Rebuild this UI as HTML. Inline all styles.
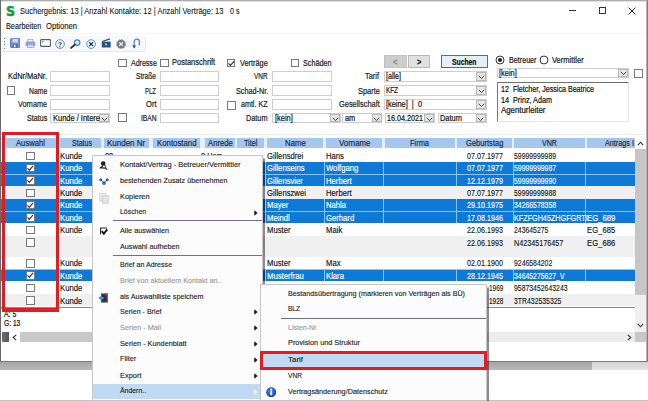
<!DOCTYPE html>
<html lang="de"><head><meta charset="utf-8"><title>Suchergebnis</title>
<style>
html,body{margin:0;padding:0;background:#fff;}
body{width:648px;height:401px;position:relative;overflow:hidden;font-family:"Liberation Sans", sans-serif;}
body>div,body>span,body>svg{position:absolute;box-sizing:border-box;}
body>span{white-space:pre;line-height:12px;height:12px;-webkit-text-stroke:0.2px currentColor;transform-origin:0 0;}
</style></head><body>
<div style="left:0px;top:0px;width:648px;height:1px;background:#adadb0;"></div>
<div style="left:0px;top:1px;width:648px;height:1px;background:#e2e2e4;"></div>
<div style="left:0px;top:0px;width:1px;height:362px;background:#686868;"></div>
<div style="left:646px;top:0px;width:1px;height:362px;background:#b4b4b4;"></div>
<div style="left:647px;top:0px;width:1px;height:362px;background:#808080;"></div>
<span style="left:6.2px;top:2.7px;font-family:DejaVu Sans,Liberation Sans,sans-serif;font-size:14px;line-height:16px;height:16px;font-weight:700;color:#109b46;-webkit-text-stroke:0.5px #109b46;transform:scaleX(0.9);">S</span>
<span style="left:20.00px;top:5.30px;font-size:9.4px;color:#111;transform:scaleX(0.8028);-webkit-text-stroke-width:0.08px;">Suchergebnis: 13 | Anzahl Kontakte: 12 | Anzahl Verträge: 13</span>
<span style="left:229.50px;top:5.30px;font-size:9.4px;color:#111;transform:scaleX(0.7591);-webkit-text-stroke-width:0.08px;">0 s</span>
<div style="left:569px;top:10px;width:7px;height:1px;background:#333;"></div>
<div style="left:598.5px;top:7px;width:7.0px;height:6.5px;border:1px solid #333;"></div>
<svg style="left:628px;top:6.5px" width="8" height="8" viewBox="0 0 8 8"><path d="M0.6 0.6L7.4 7.4M7.4 0.6L0.6 7.4" stroke="#222" stroke-width="1" fill="none"/></svg>
<span style="left:5.50px;top:20.20px;font-size:8.9px;color:#111;transform:scaleX(0.8221);-webkit-text-stroke-width:0.12px;">Bearbeiten</span>
<span style="left:46.00px;top:20.20px;font-size:8.9px;color:#111;transform:scaleX(0.8604);-webkit-text-stroke-width:0.12px;">Optionen</span>
<div style="left:1px;top:33px;width:645px;height:1px;background:#f7f7f7;"></div>
<div style="left:2px;top:35.5px;width:144px;height:16.5px;background:#f6f8fc;border-radius:2px;border-bottom:1px solid #e3e8f0;border-right:1px solid #e8ebf1;"></div>
<div style="left:4px;top:37.6px;width:1px;height:1.0px;background:#5c6b80;"></div>
<div style="left:4px;top:40.95px;width:1px;height:1.0px;background:#5c6b80;"></div>
<div style="left:4px;top:44.300000000000004px;width:1px;height:1.0px;background:#5c6b80;"></div>
<div style="left:4px;top:47.650000000000006px;width:1px;height:1.0px;background:#5c6b80;"></div>
<svg style="left:10px;top:38.2px" width="10.4" height="10.2" viewBox="0 0 11 11"><rect x="0.5" y="0.5" width="10" height="10" rx="1" fill="#7590cb" stroke="#5a76b6"/><rect x="2.5" y="0.8" width="6" height="4" fill="#cfdaf0"/><rect x="3" y="6.5" width="5" height="4" fill="#5069a8"/><rect x="4.2" y="7.2" width="1.6" height="2.8" fill="#f0f4fb"/></svg>
<svg style="left:25.2px;top:39.2px" width="10.8" height="9" viewBox="0 0 12 11"><rect x="3" y="0.5" width="6" height="3.5" fill="#f4f7fc" stroke="#8aa0cc" stroke-width=".8"/><rect x="0.6" y="3.6" width="10.8" height="5" rx="1" fill="#93abd9" stroke="#6c87c0" stroke-width=".8"/><rect x="2.4" y="6.6" width="7.2" height="3.6" fill="#f2f5fb" stroke="#7c93c4" stroke-width=".8"/><rect x="3.6" y="8" width="4.6" height=".8" fill="#7c93c4"/></svg>
<svg style="left:40px;top:39.2px" width="11" height="8" viewBox="0 0 11 8"><rect x="0.6" y="0.6" width="9.8" height="6.8" rx=".6" fill="#fff" stroke="#555c68" stroke-width="1.1"/><rect x="2" y="2.2" width="1.6" height="1.3" fill="#5577bb"/></svg>
<svg style="left:55.4px;top:38.6px" width="10" height="10" viewBox="0 0 11 11"><circle cx="5.5" cy="5.5" r="4.7" fill="#fff" stroke="#3f77b7" stroke-width="1"/><text x="5.5" y="8.3" font-size="7.8" font-weight="700" text-anchor="middle" fill="#1c2d44" font-family="Liberation Sans, sans-serif">?</text></svg>
<svg style="left:70px;top:38.6px" width="11" height="10" viewBox="0 0 12 11"><circle cx="7.8" cy="3.9" r="3" fill="#d8e9fa" stroke="#3f86cf" stroke-width="1.4"/><path d="M5.3 6.2L1.2 9.8" stroke="#23282e" stroke-width="2" stroke-linecap="round"/></svg>
<svg style="left:85.8px;top:38.6px" width="10.2" height="10.2" viewBox="0 0 11 11"><circle cx="5.5" cy="5.5" r="4.7" fill="#f4f9ff" stroke="#4a8ccb" stroke-width="1"/><path d="M3.3 3.3L7.7 7.7M7.7 3.3L3.3 7.7" stroke="#1f2a38" stroke-width="1.3"/></svg>
<svg style="left:100.6px;top:38.3px" width="10.4" height="10" viewBox="0 0 11 11"><path d="M1 3.8L9.6 0.9" stroke="#2a4d75" stroke-width="1.3"/><rect x="0.6" y="4" width="9.8" height="6.4" fill="#27527f"/><rect x="4.2" y="6" width="2.2" height="2" fill="#9fd0f5"/></svg>
<svg style="left:115.7px;top:38.6px" width="10.2" height="10.2" viewBox="0 0 11 11"><circle cx="5.5" cy="5.5" r="4.7" fill="#77797d"/><path d="M3.6 3.6L7.4 7.4M7.4 3.6L3.6 7.4" stroke="#e9e9e9" stroke-width="1.5"/><circle cx="5.5" cy="5.5" r="4.9" fill="none" stroke="#8d8f94" stroke-width=".9" stroke-dasharray="2 1.2"/></svg>
<svg style="left:132.2px;top:37.8px" width="9" height="11" viewBox="0 0 9 11"><path d="M2.2 8V4Q2.2 1.2 4.8 1.2Q7.4 1.2 7.4 4V7.6" fill="none" stroke="#5288cc" stroke-width="1.3"/><path d="M0.4 7.4L2.2 10.4L4 7.4Z" fill="#1f3f70"/></svg>
<span style="left:8.00px;top:69.90px;font-size:8.4px;color:#1a1a1a;transform:scaleX(0.8914);">KdNr/MaNr.</span>
<span style="left:28.80px;top:84.80px;font-size:8.4px;color:#1a1a1a;transform:scaleX(0.8145);">Name</span>
<span style="left:18.00px;top:98.40px;font-size:8.4px;color:#1a1a1a;transform:scaleX(0.8649);">Vorname</span>
<span style="left:26.80px;top:111.80px;font-size:8.4px;color:#1a1a1a;transform:scaleX(0.8505);">Status</span>
<div style="left:50px;top:70.7px;width:60px;height:10.899999999999991px;background:#fff;border:1px solid #cdcdcd;"></div>
<div style="left:50px;top:84.8px;width:60px;height:10.900000000000006px;background:#fff;border:1px solid #cdcdcd;"></div>
<div style="left:50px;top:98.7px;width:60px;height:10.899999999999991px;background:#fff;border:1px solid #cdcdcd;"></div>
<div style="left:50px;top:112.7px;width:60px;height:10.700000000000003px;background:#fff;border:1px solid #cdcdcd;"></div>
<div style="left:99px;top:113.7px;width:10px;height:8.700000000000003px;background:#e6e6e6;border:1px solid #b9b9b9;"></div>
<svg style="left:100.5px;top:116.55000000000001px" width="7" height="5" viewBox="0 0 7 5"><path d="M0.8 0.8L3.5 3.6L6.2 0.8" stroke="#444" stroke-width="1" fill="none"/></svg>
<span style="left:52.50px;top:112.05px;font-size:8.4px;color:#111;transform:scaleX(0.8931);">Kunde / Intere</span>
<div style="left:6.5px;top:86.3px;width:8.6px;height:8.599999999999994px;background:#fff;border:1px solid #787878;"></div>
<div style="left:118.3px;top:58.8px;width:8.599999999999994px;height:8.599999999999994px;background:#fff;border:1px solid #787878;"></div>
<span style="left:130.50px;top:56.70px;font-size:8.4px;color:#1a1a1a;transform:scaleX(0.8395);">Adresse</span>
<div style="left:160px;top:58.8px;width:8.599999999999994px;height:8.599999999999994px;background:#fff;border:1px solid #787878;"></div>
<span style="left:171.80px;top:55.60px;font-size:8.4px;color:#1a1a1a;transform:scaleX(0.8922);">Postanschrift</span>
<span style="left:136.30px;top:69.90px;font-size:8.4px;color:#1a1a1a;transform:scaleX(0.7955);">Straße</span>
<div style="left:160px;top:70.7px;width:59.30000000000001px;height:10.899999999999991px;background:#fff;border:1px solid #cdcdcd;"></div>
<span style="left:145.40px;top:84.80px;font-size:8.4px;color:#1a1a1a;transform:scaleX(0.7089);">PLZ</span>
<div style="left:160px;top:84.8px;width:59.30000000000001px;height:10.900000000000006px;background:#fff;border:1px solid #cdcdcd;"></div>
<span style="left:145.80px;top:98.40px;font-size:8.4px;color:#1a1a1a;transform:scaleX(0.9020);">Ort</span>
<div style="left:160px;top:98.7px;width:59.30000000000001px;height:10.899999999999991px;background:#fff;border:1px solid #cdcdcd;"></div>
<span style="left:140.60px;top:111.80px;font-size:8.4px;color:#1a1a1a;transform:scaleX(0.8026);">IBAN</span>
<div style="left:160px;top:112.7px;width:59.30000000000001px;height:10.700000000000003px;background:#fff;border:1px solid #cdcdcd;"></div>
<div style="left:118.3px;top:113.2px;width:8.599999999999994px;height:8.599999999999994px;background:#fff;border:1px solid #787878;"></div>
<div style="left:226.8px;top:58.8px;width:8.599999999999994px;height:8.599999999999994px;background:#fff;border:1px solid #787878;"></div>
<svg style="left:226.8px;top:58.8px" width="8.6" height="8.6" viewBox="0 0 8 8"><path d="M1.4 4.1L3.2 6L6.7 1.9" stroke="#333" stroke-width="1.1" fill="none"/></svg>
<span style="left:239.50px;top:56.90px;font-size:8.4px;color:#1a1a1a;transform:scaleX(0.8778);">Verträge</span>
<div style="left:290.8px;top:58.8px;width:8.600000000000023px;height:8.599999999999994px;background:#fff;border:1px solid #787878;"></div>
<span style="left:303.20px;top:56.90px;font-size:8.4px;color:#1a1a1a;transform:scaleX(0.8650);">Schäden</span>
<span style="left:254.30px;top:69.90px;font-size:8.4px;color:#1a1a1a;transform:scaleX(0.7633);">VNR</span>
<span style="left:235.50px;top:84.80px;font-size:8.4px;color:#1a1a1a;transform:scaleX(0.8671);">Schad-Nr.</span>
<span style="left:241.30px;top:98.40px;font-size:8.4px;color:#1a1a1a;transform:scaleX(0.8497);">amtl. KZ</span>
<span style="left:246.30px;top:111.80px;font-size:8.4px;color:#1a1a1a;transform:scaleX(0.8714);">Datum</span>
<div style="left:272px;top:70.7px;width:59.5px;height:10.899999999999991px;background:#fff;border:1px solid #cdcdcd;"></div>
<div style="left:272px;top:84.8px;width:59.5px;height:10.900000000000006px;background:#fff;border:1px solid #cdcdcd;"></div>
<div style="left:272px;top:98.7px;width:59.5px;height:10.899999999999991px;background:#fff;border:1px solid #cdcdcd;"></div>
<div style="left:227.3px;top:101.2px;width:8.599999999999994px;height:8.599999999999994px;background:#fff;border:1px solid #787878;"></div>
<div style="left:272px;top:112.7px;width:69px;height:10.700000000000003px;background:#fff;border:1px solid #cdcdcd;"></div>
<div style="left:330px;top:113.7px;width:10px;height:8.700000000000003px;background:#e6e6e6;border:1px solid #b9b9b9;"></div>
<svg style="left:331.5px;top:116.55000000000001px" width="7" height="5" viewBox="0 0 7 5"><path d="M0.8 0.8L3.5 3.6L6.2 0.8" stroke="#444" stroke-width="1" fill="none"/></svg>
<span style="left:274.50px;top:112.05px;font-size:8.4px;color:#111;transform:scaleX(0.8850);">[kein]</span>
<div style="left:342.2px;top:112.7px;width:40.30000000000001px;height:10.700000000000003px;background:#fff;border:1px solid #cdcdcd;"></div>
<div style="left:371.5px;top:113.7px;width:10.0px;height:8.700000000000003px;background:#e6e6e6;border:1px solid #b9b9b9;"></div>
<svg style="left:373.0px;top:116.55000000000001px" width="7" height="5" viewBox="0 0 7 5"><path d="M0.8 0.8L3.5 3.6L6.2 0.8" stroke="#444" stroke-width="1" fill="none"/></svg>
<span style="left:344.70px;top:112.05px;font-size:8.4px;color:#111;transform:scaleX(0.8850);">am</span>
<div style="left:384.2px;top:55.3px;width:22.400000000000034px;height:12.299999999999997px;background:#cdcdcd;border:1px solid #c2c2c2;"></div>
<span style="left:393.23px;top:55.90px;font-size:8.4px;color:#8a8a8a;transform:scaleX(0.8850);font-weight:700;">&lt;</span>
<div style="left:408px;top:55.3px;width:22.399999999999977px;height:12.299999999999997px;background:#e1e1e1;border:1px solid #b8b8b8;"></div>
<span style="left:417.03px;top:55.90px;font-size:8.4px;color:#222;transform:scaleX(0.8850);font-weight:700;">&gt;</span>
<div style="left:440.8px;top:55.3px;width:46.80000000000001px;height:13.0px;background:#e5effa;border:1.5px solid #1f7bd4;"></div>
<span style="left:451.80px;top:56.00px;font-size:8.4px;color:#111;transform:scaleX(0.8099);font-weight:700;">Suchen</span>
<span style="left:365.49px;top:69.90px;font-size:8.4px;color:#1a1a1a;transform:scaleX(0.8850);">Tarif</span>
<div style="left:383.8px;top:70.7px;width:103.19999999999999px;height:10.899999999999991px;background:#fff;border:1px solid #cdcdcd;"></div>
<div style="left:476px;top:71.7px;width:10px;height:8.899999999999991px;background:#e6e6e6;border:1px solid #b9b9b9;"></div>
<svg style="left:477.5px;top:74.65px" width="7" height="5" viewBox="0 0 7 5"><path d="M0.8 0.8L3.5 3.6L6.2 0.8" stroke="#444" stroke-width="1" fill="none"/></svg>
<span style="left:386.00px;top:70.15px;font-size:8.4px;color:#111;transform:scaleX(0.8473);">[alle]</span>
<span style="left:357.65px;top:84.80px;font-size:8.4px;color:#1a1a1a;transform:scaleX(0.8850);">Sparte</span>
<div style="left:383.8px;top:84.8px;width:103.19999999999999px;height:10.900000000000006px;background:#fff;border:1px solid #cdcdcd;"></div>
<div style="left:476px;top:85.8px;width:10px;height:8.900000000000006px;background:#e6e6e6;border:1px solid #b9b9b9;"></div>
<svg style="left:477.5px;top:88.75px" width="7" height="5" viewBox="0 0 7 5"><path d="M0.8 0.8L3.5 3.6L6.2 0.8" stroke="#444" stroke-width="1" fill="none"/></svg>
<span style="left:386.00px;top:84.25px;font-size:8.4px;color:#111;transform:scaleX(0.7581);">KFZ</span>
<span style="left:338.71px;top:98.40px;font-size:8.4px;color:#1a1a1a;transform:scaleX(0.8850);">Gesellschaft</span>
<div style="left:383.8px;top:98.7px;width:103.19999999999999px;height:10.899999999999991px;background:#fff;border:1px solid #cdcdcd;"></div>
<div style="left:476px;top:99.7px;width:10px;height:8.899999999999991px;background:#e6e6e6;border:1px solid #b9b9b9;"></div>
<svg style="left:477.5px;top:102.65px" width="7" height="5" viewBox="0 0 7 5"><path d="M0.8 0.8L3.5 3.6L6.2 0.8" stroke="#444" stroke-width="1" fill="none"/></svg>
<span style="left:386.00px;top:98.15px;font-size:8.4px;color:#111;transform:scaleX(0.8817);">[keine]  |  0</span>
<div style="left:384.5px;top:112.7px;width:50.69999999999999px;height:10.700000000000003px;background:#fff;border:1px solid #cdcdcd;"></div>
<div style="left:424.2px;top:113.7px;width:10.0px;height:8.700000000000003px;background:#e6e6e6;border:1px solid #b9b9b9;"></div>
<svg style="left:425.7px;top:116.55000000000001px" width="7" height="5" viewBox="0 0 7 5"><path d="M0.8 0.8L3.5 3.6L6.2 0.8" stroke="#444" stroke-width="1" fill="none"/></svg>
<span style="left:387.00px;top:112.00px;font-size:8.4px;color:#111;transform:scaleX(0.8587);">16.04.2021</span>
<div style="left:437.5px;top:112.7px;width:49.30000000000001px;height:10.700000000000003px;background:#fff;border:1px solid #cdcdcd;"></div>
<div style="left:475.8px;top:113.7px;width:10.0px;height:8.700000000000003px;background:#e6e6e6;border:1px solid #b9b9b9;"></div>
<svg style="left:477.3px;top:116.55000000000001px" width="7" height="5" viewBox="0 0 7 5"><path d="M0.8 0.8L3.5 3.6L6.2 0.8" stroke="#444" stroke-width="1" fill="none"/></svg>
<span style="left:440.00px;top:112.05px;font-size:8.4px;color:#111;transform:scaleX(0.8850);">Datum</span>
<svg style="left:495px;top:55px" width="10" height="10" viewBox="0 0 10 10"><circle cx="5" cy="5" r="4" fill="#fff" stroke="#333" stroke-width="1"/><circle cx="5" cy="5" r="2.1" fill="#222"/></svg>
<span style="left:508.50px;top:53.80px;font-size:8.4px;color:#1a1a1a;transform:scaleX(0.8560);">Betreuer</span>
<svg style="left:539px;top:55px" width="10" height="10" viewBox="0 0 10 10"><circle cx="5" cy="5" r="4" fill="#fff" stroke="#333" stroke-width="1"/></svg>
<span style="left:552.30px;top:53.80px;font-size:8.4px;color:#1a1a1a;transform:scaleX(0.8961);">Vermittler</span>
<div style="left:496.5px;top:67.5px;width:132.79999999999995px;height:10.5px;background:#fff;border:1px solid #cdcdcd;"></div>
<div style="left:618.3px;top:68.5px;width:10.0px;height:8.5px;background:#e6e6e6;border:1px solid #b9b9b9;"></div>
<svg style="left:619.8px;top:71.25px" width="7" height="5" viewBox="0 0 7 5"><path d="M0.8 0.8L3.5 3.6L6.2 0.8" stroke="#444" stroke-width="1" fill="none"/></svg>
<span style="left:499.00px;top:66.75px;font-size:8.4px;color:#111;transform:scaleX(0.8850);">[kein]</span>
<div style="left:634px;top:69px;width:9px;height:9px;background:#fff;border:1px solid #787878;"></div>
<div style="left:496.5px;top:82px;width:132.79999999999995px;height:40px;background:#fff;border-top:1.5px solid #6f6f6f;border-left:1.5px solid #7a7a7a;border-right:1px solid #e6e6e6;border-bottom:1px solid #e6e6e6;"></div>
<span style="left:501.00px;top:83.00px;font-size:8.4px;color:#111;transform:scaleX(0.8502);">12  Fletcher, Jessica Beatrice</span>
<span style="left:501.00px;top:93.50px;font-size:8.4px;color:#111;transform:scaleX(0.8626);">14  Prinz, Adam</span>
<span style="left:501.00px;top:104.00px;font-size:8.4px;color:#111;transform:scaleX(0.9368);">Agenturleiter</span>
<div style="left:1px;top:134px;width:645px;height:1px;background:#ececec;"></div>
<div style="left:1px;top:138px;width:634px;height:10px;background:#e4f0fc;"></div>
<div style="left:4.4px;top:138px;width:51.6px;height:10px;background:#a5c6ed;"></div>
<span style="left:16.00px;top:137.00px;font-size:9.1px;color:#14233a;transform:scaleX(0.8436);-webkit-text-stroke-width:0.15px;">Auswahl</span>
<div style="left:60px;top:138px;width:41.3px;height:10px;background:#a5c6ed;"></div>
<span style="left:71.70px;top:137.00px;font-size:9.1px;color:#14233a;transform:scaleX(0.7758);-webkit-text-stroke-width:0.15px;">Status</span>
<div style="left:104.3px;top:138px;width:44.7px;height:10px;background:#a5c6ed;"></div>
<span style="left:107.30px;top:137.00px;font-size:9.1px;color:#14233a;transform:scaleX(0.8785);-webkit-text-stroke-width:0.15px;">Kunden Nr</span>
<div style="left:152.5px;top:138px;width:47.5px;height:10px;background:#a5c6ed;"></div>
<span style="left:156.90px;top:137.00px;font-size:9.1px;color:#14233a;transform:scaleX(0.8584);-webkit-text-stroke-width:0.15px;">Kontostand</span>
<div style="left:204.5px;top:138px;width:30.5px;height:10px;background:#a5c6ed;"></div>
<span style="left:208.00px;top:137.00px;font-size:9.1px;color:#14233a;transform:scaleX(0.8456);-webkit-text-stroke-width:0.15px;">Anrede</span>
<div style="left:236.8px;top:138px;width:27.399999999999977px;height:10px;background:#a5c6ed;"></div>
<span style="left:244.10px;top:137.00px;font-size:9.1px;color:#14233a;transform:scaleX(0.7896);-webkit-text-stroke-width:0.15px;">Titel</span>
<div style="left:266.7px;top:138px;width:56.80000000000001px;height:10px;background:#a5c6ed;"></div>
<span style="left:284.50px;top:137.00px;font-size:9.1px;color:#14233a;transform:scaleX(0.8613);-webkit-text-stroke-width:0.15px;">Name</span>
<div style="left:326px;top:138px;width:56px;height:10px;background:#a5c6ed;"></div>
<span style="left:338.50px;top:137.00px;font-size:9.1px;color:#14233a;transform:scaleX(0.8625);-webkit-text-stroke-width:0.15px;">Vorname</span>
<div style="left:384.6px;top:138px;width:70.19999999999999px;height:10px;background:#a5c6ed;"></div>
<span style="left:410.30px;top:137.00px;font-size:9.1px;color:#14233a;transform:scaleX(0.8172);-webkit-text-stroke-width:0.15px;">Firma</span>
<div style="left:457.3px;top:138px;width:54.900000000000034px;height:10px;background:#a5c6ed;"></div>
<span style="left:466.30px;top:137.00px;font-size:9.1px;color:#14233a;transform:scaleX(0.8311);-webkit-text-stroke-width:0.15px;">Geburtstag</span>
<div style="left:514.4px;top:138px;width:70.30000000000007px;height:10px;background:#a5c6ed;"></div>
<span style="left:542.40px;top:137.00px;font-size:9.1px;color:#14233a;transform:scaleX(0.7759);-webkit-text-stroke-width:0.15px;">VNR</span>
<div style="left:586.9px;top:138px;width:48.10000000000002px;height:10px;background:#a5c6ed;"></div>
<span style="left:604.70px;top:137.00px;font-size:9.1px;color:#14233a;transform:scaleX(0.7966);-webkit-text-stroke-width:0.15px;">Antrags I</span>
<div style="left:26.3px;top:151.70000000000002px;width:8.400000000000002px;height:8.400000000000006px;background:#fff;border:1px solid #787878;"></div>
<span style="left:60.00px;top:150.00px;font-size:8.7px;color:#111;transform:scaleX(0.8876);-webkit-text-stroke-width:0.15px;">Kunde</span>
<span style="left:266.80px;top:150.00px;font-size:8.7px;color:#111;transform:scaleX(0.8850);-webkit-text-stroke-width:0.15px;">Gillensdrei</span>
<span style="left:326.20px;top:150.00px;font-size:8.7px;color:#111;transform:scaleX(0.8850);-webkit-text-stroke-width:0.15px;">Hans</span>
<span style="left:467.10px;top:150.00px;font-size:8.6px;color:#111;transform:scaleX(0.8346);-webkit-text-stroke-width:0.12px;">07.07.1977</span>
<span style="left:514.40px;top:150.00px;font-size:8.6px;color:#111;transform:scaleX(0.8000);-webkit-text-stroke-width:0.12px;">59999999989</span>
<div style="left:1px;top:161.65px;width:634px;height:12.349999999999994px;background:#8ec2f0;"></div>
<div style="left:1px;top:162.15px;width:634px;height:11.449999999999989px;background:#0f79d8;"></div>
<div style="left:59.3px;top:161.95000000000002px;width:0.7999999999999972px;height:11.749999999999972px;background:#86c4f4;"></div>
<div style="left:102.5px;top:161.95000000000002px;width:0.7999999999999972px;height:11.749999999999972px;background:#86c4f4;"></div>
<div style="left:150.5px;top:161.95000000000002px;width:0.8000000000000114px;height:11.749999999999972px;background:#86c4f4;"></div>
<div style="left:202px;top:161.95000000000002px;width:0.8000000000000114px;height:11.749999999999972px;background:#86c4f4;"></div>
<div style="left:236.5px;top:161.95000000000002px;width:0.8000000000000114px;height:11.749999999999972px;background:#86c4f4;"></div>
<div style="left:264.5px;top:161.95000000000002px;width:0.8000000000000114px;height:11.749999999999972px;background:#86c4f4;"></div>
<div style="left:324.2px;top:161.95000000000002px;width:0.8000000000000114px;height:11.749999999999972px;background:#86c4f4;"></div>
<div style="left:382.8px;top:161.95000000000002px;width:0.8000000000000114px;height:11.749999999999972px;background:#86c4f4;"></div>
<div style="left:455.6px;top:161.95000000000002px;width:0.8000000000000114px;height:11.749999999999972px;background:#86c4f4;"></div>
<div style="left:512.9px;top:161.95000000000002px;width:0.7999999999999545px;height:11.749999999999972px;background:#86c4f4;"></div>
<div style="left:585.4px;top:161.95000000000002px;width:0.7999999999999545px;height:11.749999999999972px;background:#86c4f4;"></div>
<div style="left:26.3px;top:164.05px;width:8.400000000000002px;height:8.400000000000006px;background:#fff;border:1px solid #787878;"></div>
<svg style="left:26.3px;top:164.05px" width="8.4" height="8.4" viewBox="0 0 8 8"><path d="M1.4 4.1L3.2 6L6.7 1.9" stroke="#333" stroke-width="1.1" fill="none"/></svg>
<span style="left:60.00px;top:162.35px;font-size:8.7px;color:#fff;transform:scaleX(0.8876);-webkit-text-stroke-width:0.15px;">Kunde</span>
<span style="left:266.80px;top:162.35px;font-size:8.7px;color:#fff;transform:scaleX(0.8850);-webkit-text-stroke-width:0.15px;">Gillenseins</span>
<span style="left:326.20px;top:162.35px;font-size:8.7px;color:#fff;transform:scaleX(0.8850);-webkit-text-stroke-width:0.15px;">Wolfgang</span>
<span style="left:467.10px;top:162.35px;font-size:8.6px;color:#fff;transform:scaleX(0.8346);-webkit-text-stroke-width:0.12px;">07.07.1977</span>
<span style="left:514.40px;top:162.35px;font-size:8.6px;color:#fff;transform:scaleX(0.8000);-webkit-text-stroke-width:0.12px;">59999999987</span>
<div style="left:1px;top:174.0px;width:634px;height:12.349999999999994px;background:#8ec2f0;"></div>
<div style="left:1px;top:174.5px;width:634px;height:11.449999999999989px;background:#0f79d8;"></div>
<div style="left:59.3px;top:174.3px;width:0.7999999999999972px;height:11.749999999999972px;background:#86c4f4;"></div>
<div style="left:102.5px;top:174.3px;width:0.7999999999999972px;height:11.749999999999972px;background:#86c4f4;"></div>
<div style="left:150.5px;top:174.3px;width:0.8000000000000114px;height:11.749999999999972px;background:#86c4f4;"></div>
<div style="left:202px;top:174.3px;width:0.8000000000000114px;height:11.749999999999972px;background:#86c4f4;"></div>
<div style="left:236.5px;top:174.3px;width:0.8000000000000114px;height:11.749999999999972px;background:#86c4f4;"></div>
<div style="left:264.5px;top:174.3px;width:0.8000000000000114px;height:11.749999999999972px;background:#86c4f4;"></div>
<div style="left:324.2px;top:174.3px;width:0.8000000000000114px;height:11.749999999999972px;background:#86c4f4;"></div>
<div style="left:382.8px;top:174.3px;width:0.8000000000000114px;height:11.749999999999972px;background:#86c4f4;"></div>
<div style="left:455.6px;top:174.3px;width:0.8000000000000114px;height:11.749999999999972px;background:#86c4f4;"></div>
<div style="left:512.9px;top:174.3px;width:0.7999999999999545px;height:11.749999999999972px;background:#86c4f4;"></div>
<div style="left:585.4px;top:174.3px;width:0.7999999999999545px;height:11.749999999999972px;background:#86c4f4;"></div>
<div style="left:26.3px;top:176.4px;width:8.400000000000002px;height:8.400000000000006px;background:#fff;border:1px solid #787878;"></div>
<svg style="left:26.3px;top:176.4px" width="8.4" height="8.4" viewBox="0 0 8 8"><path d="M1.4 4.1L3.2 6L6.7 1.9" stroke="#333" stroke-width="1.1" fill="none"/></svg>
<span style="left:60.00px;top:174.70px;font-size:8.7px;color:#fff;transform:scaleX(0.8876);-webkit-text-stroke-width:0.15px;">Kunde</span>
<span style="left:266.80px;top:174.70px;font-size:8.7px;color:#fff;transform:scaleX(0.8850);-webkit-text-stroke-width:0.15px;">Gillensvier</span>
<span style="left:326.20px;top:174.70px;font-size:8.7px;color:#fff;transform:scaleX(0.8850);-webkit-text-stroke-width:0.15px;">Herbert</span>
<span style="left:467.10px;top:174.70px;font-size:8.6px;color:#fff;transform:scaleX(0.8346);-webkit-text-stroke-width:0.12px;">12.12.1979</span>
<span style="left:514.40px;top:174.70px;font-size:8.6px;color:#fff;transform:scaleX(0.8000);-webkit-text-stroke-width:0.12px;">59999999990</span>
<div style="left:1px;top:186.35px;width:634px;height:12.349999999999994px;background:#f0f0f0;"></div>
<div style="left:26.3px;top:188.75px;width:8.400000000000002px;height:8.400000000000006px;background:#fff;border:1px solid #787878;"></div>
<span style="left:60.00px;top:187.05px;font-size:8.7px;color:#111;transform:scaleX(0.8876);-webkit-text-stroke-width:0.15px;">Kunde</span>
<span style="left:266.80px;top:187.05px;font-size:8.7px;color:#111;transform:scaleX(0.8850);-webkit-text-stroke-width:0.15px;">Gillenszwei</span>
<span style="left:326.20px;top:187.05px;font-size:8.7px;color:#111;transform:scaleX(0.8850);-webkit-text-stroke-width:0.15px;">Herbert</span>
<span style="left:467.10px;top:187.05px;font-size:8.6px;color:#111;transform:scaleX(0.8346);-webkit-text-stroke-width:0.12px;">07.07.1977</span>
<span style="left:514.40px;top:187.05px;font-size:8.6px;color:#111;transform:scaleX(0.8000);-webkit-text-stroke-width:0.12px;">59999999988</span>
<div style="left:1px;top:198.7px;width:634px;height:12.349999999999994px;background:#8ec2f0;"></div>
<div style="left:1px;top:199.2px;width:634px;height:11.449999999999989px;background:#0f79d8;"></div>
<div style="left:59.3px;top:199.0px;width:0.7999999999999972px;height:11.749999999999972px;background:#86c4f4;"></div>
<div style="left:102.5px;top:199.0px;width:0.7999999999999972px;height:11.749999999999972px;background:#86c4f4;"></div>
<div style="left:150.5px;top:199.0px;width:0.8000000000000114px;height:11.749999999999972px;background:#86c4f4;"></div>
<div style="left:202px;top:199.0px;width:0.8000000000000114px;height:11.749999999999972px;background:#86c4f4;"></div>
<div style="left:236.5px;top:199.0px;width:0.8000000000000114px;height:11.749999999999972px;background:#86c4f4;"></div>
<div style="left:264.5px;top:199.0px;width:0.8000000000000114px;height:11.749999999999972px;background:#86c4f4;"></div>
<div style="left:324.2px;top:199.0px;width:0.8000000000000114px;height:11.749999999999972px;background:#86c4f4;"></div>
<div style="left:382.8px;top:199.0px;width:0.8000000000000114px;height:11.749999999999972px;background:#86c4f4;"></div>
<div style="left:455.6px;top:199.0px;width:0.8000000000000114px;height:11.749999999999972px;background:#86c4f4;"></div>
<div style="left:512.9px;top:199.0px;width:0.7999999999999545px;height:11.749999999999972px;background:#86c4f4;"></div>
<div style="left:585.4px;top:199.0px;width:0.7999999999999545px;height:11.749999999999972px;background:#86c4f4;"></div>
<div style="left:26.3px;top:201.1px;width:8.400000000000002px;height:8.400000000000006px;background:#fff;border:1px solid #787878;"></div>
<svg style="left:26.3px;top:201.1px" width="8.4" height="8.4" viewBox="0 0 8 8"><path d="M1.4 4.1L3.2 6L6.7 1.9" stroke="#333" stroke-width="1.1" fill="none"/></svg>
<span style="left:60.00px;top:199.40px;font-size:8.7px;color:#fff;transform:scaleX(0.8876);-webkit-text-stroke-width:0.15px;">Kunde</span>
<span style="left:266.80px;top:199.40px;font-size:8.7px;color:#fff;transform:scaleX(0.8850);-webkit-text-stroke-width:0.15px;">Mayer</span>
<span style="left:326.20px;top:199.40px;font-size:8.7px;color:#fff;transform:scaleX(0.8850);-webkit-text-stroke-width:0.15px;">Nahla</span>
<span style="left:467.10px;top:199.40px;font-size:8.6px;color:#fff;transform:scaleX(0.8346);-webkit-text-stroke-width:0.12px;">29.10.1975</span>
<span style="left:514.40px;top:199.40px;font-size:8.6px;color:#fff;transform:scaleX(0.8000);-webkit-text-stroke-width:0.12px;">34266578358</span>
<div style="left:1px;top:211.04999999999998px;width:634px;height:12.349999999999994px;background:#8ec2f0;"></div>
<div style="left:1px;top:211.54999999999998px;width:634px;height:11.449999999999989px;background:#0f79d8;"></div>
<div style="left:59.3px;top:211.35px;width:0.7999999999999972px;height:11.749999999999972px;background:#86c4f4;"></div>
<div style="left:102.5px;top:211.35px;width:0.7999999999999972px;height:11.749999999999972px;background:#86c4f4;"></div>
<div style="left:150.5px;top:211.35px;width:0.8000000000000114px;height:11.749999999999972px;background:#86c4f4;"></div>
<div style="left:202px;top:211.35px;width:0.8000000000000114px;height:11.749999999999972px;background:#86c4f4;"></div>
<div style="left:236.5px;top:211.35px;width:0.8000000000000114px;height:11.749999999999972px;background:#86c4f4;"></div>
<div style="left:264.5px;top:211.35px;width:0.8000000000000114px;height:11.749999999999972px;background:#86c4f4;"></div>
<div style="left:324.2px;top:211.35px;width:0.8000000000000114px;height:11.749999999999972px;background:#86c4f4;"></div>
<div style="left:382.8px;top:211.35px;width:0.8000000000000114px;height:11.749999999999972px;background:#86c4f4;"></div>
<div style="left:455.6px;top:211.35px;width:0.8000000000000114px;height:11.749999999999972px;background:#86c4f4;"></div>
<div style="left:512.9px;top:211.35px;width:0.7999999999999545px;height:11.749999999999972px;background:#86c4f4;"></div>
<div style="left:585.4px;top:211.35px;width:0.7999999999999545px;height:11.749999999999972px;background:#86c4f4;"></div>
<div style="left:26.3px;top:213.45px;width:8.400000000000002px;height:8.400000000000006px;background:#fff;border:1px solid #787878;"></div>
<svg style="left:26.3px;top:213.45px" width="8.4" height="8.4" viewBox="0 0 8 8"><path d="M1.4 4.1L3.2 6L6.7 1.9" stroke="#333" stroke-width="1.1" fill="none"/></svg>
<span style="left:60.00px;top:211.75px;font-size:8.7px;color:#fff;transform:scaleX(0.8876);-webkit-text-stroke-width:0.15px;">Kunde</span>
<span style="left:266.80px;top:211.75px;font-size:8.7px;color:#fff;transform:scaleX(0.8850);-webkit-text-stroke-width:0.15px;">Meindl</span>
<span style="left:326.20px;top:211.75px;font-size:8.7px;color:#fff;transform:scaleX(0.8850);-webkit-text-stroke-width:0.15px;">Gerhard</span>
<span style="left:467.10px;top:211.75px;font-size:8.6px;color:#fff;transform:scaleX(0.8346);-webkit-text-stroke-width:0.12px;">17.08.1946</span>
<span style="left:514.40px;top:211.75px;font-size:8.6px;color:#fff;transform:scaleX(0.8400);-webkit-text-stroke-width:0.12px;">KFZFGH45ZHGFGRTI</span>
<span style="left:586.80px;top:211.75px;font-size:8.7px;color:#fff;transform:scaleX(0.8850);-webkit-text-stroke-width:0.15px;">EG_689</span>
<div style="left:26.3px;top:225.79999999999998px;width:8.400000000000002px;height:8.400000000000006px;background:#fff;border:1px solid #787878;"></div>
<span style="left:60.00px;top:224.10px;font-size:8.7px;color:#111;transform:scaleX(0.8876);-webkit-text-stroke-width:0.15px;">Kunde</span>
<span style="left:266.80px;top:224.10px;font-size:8.7px;color:#111;transform:scaleX(0.8850);-webkit-text-stroke-width:0.15px;">Muster</span>
<span style="left:326.20px;top:224.10px;font-size:8.7px;color:#111;transform:scaleX(0.8850);-webkit-text-stroke-width:0.15px;">Maik</span>
<span style="left:467.10px;top:224.10px;font-size:8.6px;color:#111;transform:scaleX(0.8346);-webkit-text-stroke-width:0.12px;">22.06.1993</span>
<span style="left:514.40px;top:224.10px;font-size:8.6px;color:#111;transform:scaleX(0.8000);-webkit-text-stroke-width:0.12px;">243645275</span>
<span style="left:586.80px;top:224.10px;font-size:8.7px;color:#111;transform:scaleX(0.8850);-webkit-text-stroke-width:0.15px;">EG_685</span>
<div style="left:1px;top:235.74999999999997px;width:634px;height:20.994999999999976px;background:#f0f0f0;"></div>
<div style="left:26.3px;top:238.14999999999998px;width:8.400000000000002px;height:8.400000000000006px;background:#fff;border:1px solid #787878;"></div>
<span style="left:467.10px;top:237.45px;font-size:8.6px;color:#111;transform:scaleX(0.8346);-webkit-text-stroke-width:0.12px;">22.06.1993</span>
<span style="left:514.40px;top:237.45px;font-size:8.6px;color:#111;transform:scaleX(0.8400);-webkit-text-stroke-width:0.12px;">N42345176457</span>
<span style="left:586.80px;top:237.45px;font-size:8.7px;color:#111;transform:scaleX(0.8850);-webkit-text-stroke-width:0.15px;">EG_686</span>
<div style="left:26.3px;top:259.1449999999999px;width:8.400000000000002px;height:8.399999999999977px;background:#fff;border:1px solid #787878;"></div>
<span style="left:60.00px;top:257.44px;font-size:8.7px;color:#111;transform:scaleX(0.8876);-webkit-text-stroke-width:0.15px;">Kunde</span>
<span style="left:266.80px;top:257.44px;font-size:8.7px;color:#111;transform:scaleX(0.8850);-webkit-text-stroke-width:0.15px;">Muster</span>
<span style="left:326.20px;top:257.44px;font-size:8.7px;color:#111;transform:scaleX(0.8850);-webkit-text-stroke-width:0.15px;">Max</span>
<span style="left:467.10px;top:257.44px;font-size:8.6px;color:#111;transform:scaleX(0.8346);-webkit-text-stroke-width:0.12px;">02.01.1900</span>
<span style="left:514.40px;top:257.44px;font-size:8.6px;color:#111;transform:scaleX(0.8000);-webkit-text-stroke-width:0.12px;">9246584202</span>
<div style="left:1px;top:269.09499999999997px;width:634px;height:12.350000000000023px;background:#8ec2f0;"></div>
<div style="left:1px;top:269.59499999999997px;width:634px;height:11.450000000000045px;background:#0f79d8;"></div>
<div style="left:59.3px;top:269.395px;width:0.7999999999999972px;height:11.75px;background:#86c4f4;"></div>
<div style="left:102.5px;top:269.395px;width:0.7999999999999972px;height:11.75px;background:#86c4f4;"></div>
<div style="left:150.5px;top:269.395px;width:0.8000000000000114px;height:11.75px;background:#86c4f4;"></div>
<div style="left:202px;top:269.395px;width:0.8000000000000114px;height:11.75px;background:#86c4f4;"></div>
<div style="left:236.5px;top:269.395px;width:0.8000000000000114px;height:11.75px;background:#86c4f4;"></div>
<div style="left:264.5px;top:269.395px;width:0.8000000000000114px;height:11.75px;background:#86c4f4;"></div>
<div style="left:324.2px;top:269.395px;width:0.8000000000000114px;height:11.75px;background:#86c4f4;"></div>
<div style="left:382.8px;top:269.395px;width:0.8000000000000114px;height:11.75px;background:#86c4f4;"></div>
<div style="left:455.6px;top:269.395px;width:0.8000000000000114px;height:11.75px;background:#86c4f4;"></div>
<div style="left:512.9px;top:269.395px;width:0.7999999999999545px;height:11.75px;background:#86c4f4;"></div>
<div style="left:585.4px;top:269.395px;width:0.7999999999999545px;height:11.75px;background:#86c4f4;"></div>
<div style="left:26.3px;top:271.49499999999995px;width:8.400000000000002px;height:8.399999999999977px;background:#fff;border:1px solid #787878;"></div>
<svg style="left:26.3px;top:271.49499999999995px" width="8.4" height="8.4" viewBox="0 0 8 8"><path d="M1.4 4.1L3.2 6L6.7 1.9" stroke="#333" stroke-width="1.1" fill="none"/></svg>
<span style="left:60.00px;top:269.79px;font-size:8.7px;color:#fff;transform:scaleX(0.8876);-webkit-text-stroke-width:0.15px;">Kunde</span>
<span style="left:266.80px;top:269.79px;font-size:8.7px;color:#fff;transform:scaleX(0.8850);-webkit-text-stroke-width:0.15px;">Musterfrau</span>
<span style="left:326.20px;top:269.79px;font-size:8.7px;color:#fff;transform:scaleX(0.8850);-webkit-text-stroke-width:0.15px;">Klara</span>
<span style="left:467.10px;top:269.79px;font-size:8.6px;color:#fff;transform:scaleX(0.8346);-webkit-text-stroke-width:0.12px;">28.12.1945</span>
<span style="left:514.40px;top:269.79px;font-size:8.6px;color:#fff;transform:scaleX(0.8000);-webkit-text-stroke-width:0.12px;">34645275627_V</span>
<div style="left:26.3px;top:283.84499999999997px;width:8.400000000000002px;height:8.399999999999977px;background:#fff;border:1px solid #787878;"></div>
<span style="left:60.00px;top:282.14px;font-size:8.7px;color:#111;transform:scaleX(0.8876);-webkit-text-stroke-width:0.15px;">Kunde</span>
<span style="left:488.60px;top:282.14px;font-size:8.6px;color:#111;transform:scaleX(0.7529);-webkit-text-stroke-width:0.12px;">1969</span>
<span style="left:514.40px;top:282.14px;font-size:8.6px;color:#111;transform:scaleX(0.8000);-webkit-text-stroke-width:0.12px;">95873452643243</span>
<div style="left:1px;top:293.795px;width:634px;height:12.350000000000023px;background:#f0f0f0;"></div>
<div style="left:26.3px;top:296.195px;width:8.400000000000002px;height:8.399999999999977px;background:#fff;border:1px solid #787878;"></div>
<span style="left:60.00px;top:294.50px;font-size:8.7px;color:#111;transform:scaleX(0.8876);-webkit-text-stroke-width:0.15px;">Kunde</span>
<span style="left:488.60px;top:294.50px;font-size:8.6px;color:#111;transform:scaleX(0.7529);-webkit-text-stroke-width:0.12px;">1928</span>
<span style="left:514.40px;top:294.50px;font-size:8.6px;color:#111;transform:scaleX(0.8000);-webkit-text-stroke-width:0.12px;">3TR432535325</span>
<span style="left:104.80px;top:149.60px;font-size:8.4px;color:#111;transform:scaleX(0.8850);">02</span>
<span style="left:201.00px;top:149.60px;font-size:8.4px;color:#111;transform:scaleX(0.8850);">0 Herr</span>
<div style="left:1px;top:307.14500000000004px;width:634px;height:0.8999999999999773px;background:#8a8a8a;"></div>
<div style="left:635px;top:138px;width:11.200000000000045px;height:193.5px;background:#f0f0f0;"></div>
<div style="left:635px;top:138px;width:11.200000000000045px;height:10.599999999999994px;background:#fcfcfc;"></div>
<div style="left:635.4px;top:148.6px;width:10.800000000000068px;height:146.70000000000002px;background:#c6c6c6;"></div>
<svg style="left:637px;top:141px" width="7" height="5" viewBox="0 0 7 5"><path d="M0.8 4.2L3.5 1.2L6.2 4.2" stroke="#333" stroke-width="1.1" fill="none"/></svg>
<svg style="left:637px;top:323px" width="7" height="5" viewBox="0 0 7 5"><path d="M0.8 0.8L3.5 3.8L6.2 0.8" stroke="#333" stroke-width="1.1" fill="none"/></svg>
<span style="left:3.70px;top:307.60px;font-size:8.4px;color:#111;transform:scaleX(0.8252);">A: 5</span>
<span style="left:3.70px;top:317.40px;font-size:8.4px;color:#111;transform:scaleX(0.7957);">G: 13</span>
<div style="left:20px;top:331.7px;width:615px;height:10.0px;background:#ededed;"></div>
<div style="left:2px;top:331.7px;width:6.5px;height:10.0px;background:linear-gradient(90deg,#6e6e6e,#555);"></div>
<div style="left:20px;top:331.7px;width:180px;height:10.0px;background:#c8c8c8;"></div>
<svg style="left:11.5px;top:333.5px" width="5" height="7" viewBox="0 0 5 7"><path d="M4.2 0.8L1.2 3.5L4.2 6.2" stroke="#333" stroke-width="1.1" fill="none"/></svg>
<svg style="left:626.5px;top:333.5px" width="5" height="7" viewBox="0 0 5 7"><path d="M0.8 0.8L3.8 3.5L0.8 6.2" stroke="#333" stroke-width="1.1" fill="none"/></svg>
<div style="left:635px;top:331.7px;width:11.200000000000045px;height:10.0px;background:#c8c8c8;"></div>
<div style="left:0px;top:361px;width:647px;height:1px;background:#7c7c7c;"></div>
<div style="left:0px;top:362px;width:592px;height:8px;background:linear-gradient(#a6a6a6,#b9b9b9);"></div>
<div style="left:592px;top:362px;width:56px;height:8px;background:linear-gradient(#d2d2d2,#e4e4e4);"></div>
<div style="left:0px;top:400px;width:648px;height:1px;background:#c4c4c4;"></div>
<div style="left:1.8px;top:132.3px;width:57.2px;height:179.7px;border:3px solid #e31b23;border-bottom-width:4px;"></div>
<div style="left:92px;top:155px;width:171px;height:245.5px;background:#fcfcfc;border:1px solid #c6c6c6;box-shadow:1.6px 1.6px 1px rgba(0,0,0,.45);"></div>
<div style="left:93px;top:383.5px;width:167.39999999999998px;height:15.800000000000011px;background:#c0daf4;"></div>
<span style="left:120.40px;top:158.70px;font-size:7.9px;color:#1e1e1e;transform:scaleX(0.9482);-webkit-text-stroke-width:0.14px;">Kontakt/Vertrag - Betreuer/Vermittler</span>
<span style="left:120.40px;top:174.70px;font-size:7.9px;color:#1e1e1e;transform:scaleX(0.9117);-webkit-text-stroke-width:0.14px;">bestehenden Zusatz übernehmen</span>
<span style="left:120.40px;top:190.70px;font-size:7.9px;color:#1e1e1e;transform:scaleX(0.9369);-webkit-text-stroke-width:0.14px;">Kopieren</span>
<span style="left:120.40px;top:206.30px;font-size:7.9px;color:#1e1e1e;transform:scaleX(0.8746);-webkit-text-stroke-width:0.14px;">Löschen</span>
<svg style="left:253.5px;top:209.49999999999997px" width="4" height="6" viewBox="0 0 4 6"><path d="M0.3 0.3L3.6 3L0.3 5.7Z" fill="#111"/></svg>
<span style="left:120.40px;top:225.10px;font-size:7.9px;color:#1e1e1e;transform:scaleX(0.9251);-webkit-text-stroke-width:0.14px;">Alle auswählen</span>
<span style="left:120.40px;top:240.50px;font-size:7.9px;color:#1e1e1e;transform:scaleX(0.9178);-webkit-text-stroke-width:0.14px;">Auswahl aufheben</span>
<span style="left:120.40px;top:259.00px;font-size:7.9px;color:#1e1e1e;transform:scaleX(0.8997);-webkit-text-stroke-width:0.14px;">Brief an Adresse</span>
<span style="left:120.40px;top:275.10px;font-size:7.9px;color:#9a9a9a;transform:scaleX(0.9120);-webkit-text-stroke-width:0.14px;">Brief von aktuellem Kontakt an..</span>
<span style="left:120.40px;top:290.50px;font-size:7.9px;color:#1e1e1e;transform:scaleX(0.9119);-webkit-text-stroke-width:0.14px;">als Auswahlliste speichem</span>
<span style="left:120.40px;top:306.20px;font-size:7.9px;color:#1e1e1e;transform:scaleX(0.9034);-webkit-text-stroke-width:0.14px;">Serien - Brief</span>
<svg style="left:253.5px;top:309.4px" width="4" height="6" viewBox="0 0 4 6"><path d="M0.3 0.3L3.6 3L0.3 5.7Z" fill="#111"/></svg>
<span style="left:120.40px;top:321.80px;font-size:7.9px;color:#9a9a9a;transform:scaleX(0.9278);-webkit-text-stroke-width:0.14px;">Serien - Mail</span>
<svg style="left:253.5px;top:325.0px" width="4" height="6" viewBox="0 0 4 6"><path d="M0.3 0.3L3.6 3L0.3 5.7Z" fill="#111"/></svg>
<span style="left:120.40px;top:337.50px;font-size:7.9px;color:#1e1e1e;transform:scaleX(0.9256);-webkit-text-stroke-width:0.14px;">Serien - Kundenblatt</span>
<svg style="left:253.5px;top:340.7px" width="4" height="6" viewBox="0 0 4 6"><path d="M0.3 0.3L3.6 3L0.3 5.7Z" fill="#111"/></svg>
<span style="left:120.40px;top:353.40px;font-size:7.9px;color:#1e1e1e;transform:scaleX(0.9175);-webkit-text-stroke-width:0.14px;">Filter</span>
<svg style="left:253.5px;top:356.59999999999997px" width="4" height="6" viewBox="0 0 4 6"><path d="M0.3 0.3L3.6 3L0.3 5.7Z" fill="#111"/></svg>
<span style="left:120.40px;top:369.70px;font-size:7.9px;color:#1e1e1e;transform:scaleX(0.9468);-webkit-text-stroke-width:0.14px;">Export</span>
<svg style="left:253.5px;top:372.9px" width="4" height="6" viewBox="0 0 4 6"><path d="M0.3 0.3L3.6 3L0.3 5.7Z" fill="#111"/></svg>
<span style="left:120.40px;top:385.30px;font-size:7.9px;color:#1e1e1e;transform:scaleX(0.8746);-webkit-text-stroke-width:0.14px;">Ändern..</span>
<svg style="left:253.5px;top:388.5px" width="4" height="6" viewBox="0 0 4 6"><path d="M0.3 0.3L3.6 3L0.3 5.7Z" fill="#fff"/></svg>
<div style="left:113px;top:220.4px;width:148.5px;height:1.0px;background:#6f6d8c;"></div>
<div style="left:113px;top:255.1px;width:148.5px;height:1.0000000000000284px;background:#6f6d8c;"></div>
<svg style="left:99.2px;top:161.1px" width="9" height="9" viewBox="0 0 9 9"><circle cx="4.2" cy="2.6" r="2.3" fill="#1d1d22"/><path d="M0.6 6.4Q4.2 3.2 7.2 6.4L7.2 7.4H0.6Z" fill="#2a2a33"/><circle cx="5" cy="5.6" r="1.6" fill="#dfe6ef" stroke="#222" stroke-width=".8"/><path d="M6.2 6.8L8.2 8.6" stroke="#222" stroke-width="1.1"/></svg>
<svg style="left:98.5px;top:177.5px" width="10" height="8" viewBox="0 0 10 8"><circle cx="1.8" cy="1.8" r="1.5" fill="#2d66a8"/><circle cx="8.2" cy="1.8" r="1.5" fill="#2d66a8"/><circle cx="5" cy="5.2" r="1.9" fill="#3a87d4"/><path d="M1.8 1.8L5 5.2L8.2 1.8" stroke="#1d3c66" stroke-width=".8" fill="none"/></svg>
<svg style="left:98.5px;top:192.5px" width="10" height="11" viewBox="0 0 10 11"><rect x="0.6" y="0.6" width="6" height="7.4" fill="#f3ecc8" stroke="#d7d2b7" stroke-width=".7"/><rect x="3.2" y="2.8" width="6" height="7.4" fill="#dfe4f0" stroke="#b9c1d6" stroke-width=".7"/></svg>
<svg style="left:100px;top:227.3px" width="8" height="10" viewBox="0 0 8 10"><path d="M0.5 7.5V1H7" stroke="#2b2b2b" stroke-width="1.2" fill="none"/><path d="M1.8 4.2L3.8 6.8L7.2 2.4" stroke="#111" stroke-width="1.9" fill="none"/></svg>
<svg style="left:98.4px;top:292.9px" width="10" height="10" viewBox="0 0 10 10"><rect x="3" y="0.4" width="6.8" height="9.2" fill="#4a4652"/><rect x="4.4" y="1.6" width="4.2" height="6.8" fill="#2c2f3c"/><rect x="7.6" y="0.4" width="2.2" height="3" fill="#8a4a4e"/><path d="M0.2 5L3.8 2.2V7.8Z" fill="#3f93e0"/><rect x="3.4" y="4" width="2.2" height="2" fill="#3f93e0"/></svg>
<div style="left:260.4px;top:283.5px;width:226.8px;height:117.0px;background:#fcfcfc;border:1px solid #c6c6c6;box-shadow:1.6px 1.6px 1px rgba(0,0,0,.45);"></div>
<div style="left:262px;top:352px;width:224px;height:16.5px;background:#c0daf4;"></div>
<span style="left:288.00px;top:287.90px;font-size:7.9px;color:#1e1e1e;transform:scaleX(0.9089);-webkit-text-stroke-width:0.14px;">Bestandsübertragung (markieren von Verträgen als BÜ)</span>
<span style="left:288.00px;top:303.30px;font-size:7.9px;color:#1e1e1e;transform:scaleX(0.8285);-webkit-text-stroke-width:0.14px;">BLZ</span>
<span style="left:288.00px;top:321.50px;font-size:7.9px;color:#9a9a9a;transform:scaleX(0.8881);-webkit-text-stroke-width:0.14px;">Listen-Nr.</span>
<span style="left:288.00px;top:337.20px;font-size:7.9px;color:#1e1e1e;transform:scaleX(0.9273);-webkit-text-stroke-width:0.14px;">Provision und Struktur</span>
<span style="left:288.00px;top:353.80px;font-size:7.9px;color:#1e1e1e;transform:scaleX(1.0063);-webkit-text-stroke-width:0.14px;">Tarif</span>
<span style="left:288.00px;top:370.00px;font-size:7.9px;color:#1e1e1e;transform:scaleX(0.8397);-webkit-text-stroke-width:0.14px;">VNR</span>
<span style="left:288.00px;top:385.80px;font-size:7.9px;color:#1e1e1e;transform:scaleX(0.9191);-webkit-text-stroke-width:0.14px;">Vertragsänderung/Datenschutz</span>
<div style="left:281.4px;top:317.6px;width:204.60000000000002px;height:1.0px;background:#6f6d8c;"></div>
<svg style="left:265.7px;top:386.7px" width="10.4" height="10.4" viewBox="0 0 10 10"><defs><radialGradient id="ig" cx="45%" cy="40%" r="60%"><stop offset="0" stop-color="#4f8df0"/><stop offset="0.7" stop-color="#2557c4"/><stop offset="1" stop-color="#183a94"/></radialGradient></defs><circle cx="5" cy="5" r="4.8" fill="url(#ig)"/><rect x="4.2" y="4" width="1.7" height="3.9" fill="#fff"/><circle cx="5.05" cy="2.5" r="1" fill="#fff"/></svg>
<div style="left:260.4px;top:350.6px;width:226.90000000000003px;height:19.0px;border:3.4px solid #e31b23;"></div>
</body></html>
